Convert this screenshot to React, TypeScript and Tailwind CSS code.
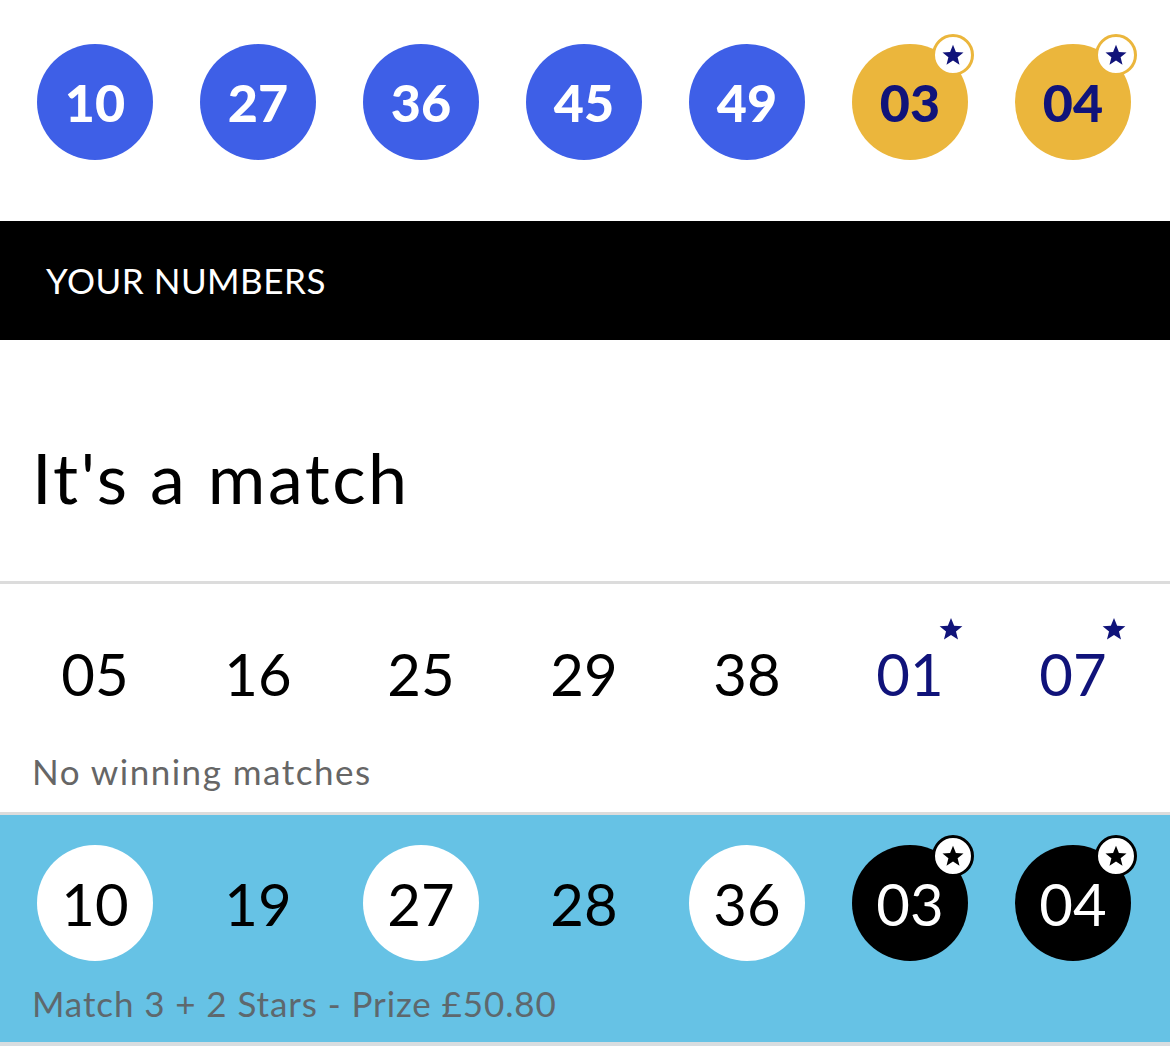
import React from "react";

const FONT = "font-['Lato','Noto_Sans',sans-serif]";

const DRAWN = ["10", "27", "36", "45", "49"];
const DRAWN_STARS = ["03", "04"];

function Star({ className }: { className?: string }) {
  return (
    <svg viewBox="0 0 24 24" className={className} fill="currentColor">
      <path d="M12 1.8l2.9 7.1 7.6.5-5.9 4.9 1.9 7.4L12 17.6l-6.5 4.1 1.9-7.4L1.5 9.4l7.6-.5z" />
    </svg>
  );
}

function Badge({ ring, star }: { ring: string; star: string }) {
  return (
    <div
      className={`absolute -right-[6px] -top-[10px] w-[42px] h-[42px] rounded-full bg-white border-[3px] ${ring} flex items-center justify-center`}
    >
      <Star className={`w-[24px] h-[24px] ${star}`} />
    </div>
  );
}

function Row({ children }: { children: React.ReactNode }) {
  return <div className="flex gap-[47px] pl-[37px]">{children}</div>;
}

const LINE_1 = [
  { n: "05" },
  { n: "16" },
  { n: "25" },
  { n: "29" },
  { n: "38" },
  { n: "01", star: true },
  { n: "07", star: true },
];

const LINE_2 = [
  { n: "10", hit: true },
  { n: "19" },
  { n: "27", hit: true },
  { n: "28" },
  { n: "36", hit: true },
  { n: "03", star: true },
  { n: "04", star: true },
];

export default function App() {
  return (
    <div className={`w-[1170px] h-[1057px] bg-white overflow-hidden ${FONT}`}>
      {/* drawn numbers */}
      <div className="pt-[44px] pb-[61px]">
        <Row>
          {DRAWN.map((n) => (
            <div
              key={n}
              className="w-[116px] h-[116px] rounded-full bg-[#3e5fe7] text-white text-[52px] font-black flex items-center justify-center"
            >
              {n}
            </div>
          ))}
          {DRAWN_STARS.map((n) => (
            <div
              key={n}
              className="relative w-[116px] h-[116px] rounded-full bg-[#ebb63c] text-[#10137a] text-[52px] font-black flex items-center justify-center"
            >
              {n}
              <Badge ring="border-[#ebb63c]" star="text-[#10137a]" />
            </div>
          ))}
        </Row>
      </div>

      <div className="h-[119px] bg-black flex items-center pl-[46px]">
        <span className="text-white text-[35px] tracking-[0.5px]">YOUR NUMBERS</span>
      </div>

      <div className="h-[241px] flex items-center pl-[32px] pt-[34px]">
        <h1 className="text-[70px] text-black tracking-[2.5px]">It's a match</h1>
      </div>

      <div className="h-[3px] bg-[#dcdcdc]" />

      {/* line 1 */}
      <div className="h-[228px] pt-[31px]">
        <Row>
          {LINE_1.map((b) => (
            <div
              key={b.n}
              className={`relative w-[116px] h-[116px] flex items-center justify-center text-[58px] ${
                b.star ? "text-[#10137a]" : "text-black"
              }`}
            >
              {b.n}
              {b.star && <Star className="absolute right-[4px] top-[1px] w-[26px] h-[26px] text-[#10137a]" />}
            </div>
          ))}
        </Row>
        <p className="pl-[32px] mt-[14px] text-[35px] tracking-[1.5px] text-[#666666]">No winning matches</p>
      </div>

      <div className="h-[3px] bg-[#dcdcdc]" />

      {/* line 2 */}
      <div className="h-[227px] bg-[#66c2e5] pt-[30px]">
        <Row>
          {LINE_2.map((b) => (
            <div
              key={b.n}
              className={`relative w-[116px] h-[116px] rounded-full flex items-center justify-center text-[58px] ${
                b.star ? "bg-black text-white" : b.hit ? "bg-white text-black" : "text-black"
              }`}
            >
              {b.n}
              {b.star && <Badge ring="border-black" star="text-black" />}
            </div>
          ))}
        </Row>
        <p className="pl-[32px] mt-[16px] text-[35px] tracking-[0.9px] text-[#5e686d]">Match 3 + 2 Stars - Prize £50.80</p>
      </div>

      <div className="h-[4px] bg-[#d8dde0]" />
    </div>
  );
}
